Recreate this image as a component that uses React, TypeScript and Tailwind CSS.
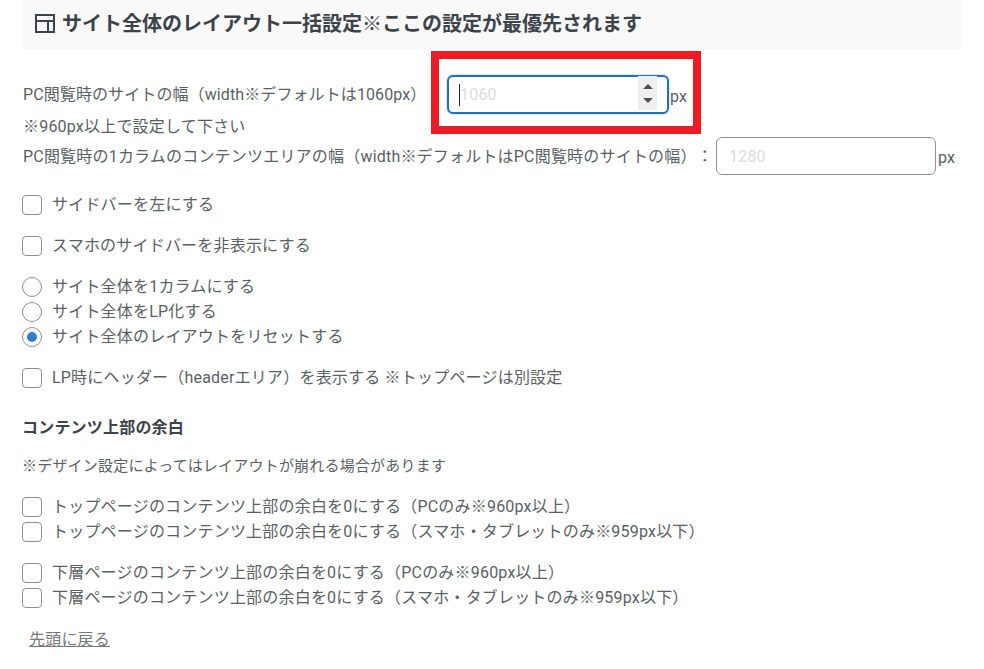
function Check({ label, className = "" }: { label: string; className?: string }) {
	return (
		<label className={`flex items-center h-[25px] ${className}`}>
			<span className="w-[20px] h-[20px] rounded-[4px] border border-[#8c8f94] bg-white shrink-0" />
			<span className="ml-[10px] whitespace-nowrap">{label}</span>
		</label>
	);
}

function Radio({ label, checked = false }: { label: string; checked?: boolean }) {
	return (
		<label className="flex items-center h-[25px]">
			<span className="w-[20px] h-[20px] rounded-full border border-[#8c8f94] bg-white shrink-0 flex items-center justify-center">
				{checked && <span className="w-[10px] h-[10px] rounded-full bg-[#2f7fc9]" />}
			</span>
			<span className="ml-[10px] whitespace-nowrap">{label}</span>
		</label>
	);
}

export default function App() {
	return (
		<div
			className="relative w-[984px] h-[669px] overflow-hidden bg-white pl-[22px] text-[16px] tracking-[0.2px] [text-spacing-trim:space-all] leading-[25px] text-[#5a5f65]"
			style={{ fontFamily: 'Roboto, "Noto Sans CJK JP", sans-serif' }}
		>
			<div className="w-[940px] h-[49px] bg-[#f9f9f9] flex items-center pl-[12px] text-[20px] tracking-normal font-bold text-[#3c434a]">
				<svg width="22" height="20" viewBox="0 0 22 20" fill="none" stroke="#3c434a" strokeWidth="2" className="mr-[6px] -mt-[1px]">
					<rect x="2" y="1" width="18" height="17" />
					<path d="M2 7h18M14 7v11" />
				</svg>
				<span className="whitespace-nowrap">サイト全体のレイアウト一括設定※ここの設定が最優先されます</span>
			</div>

			<div className="flex items-center mt-[26px] h-[39px]">
				<span className="w-[425px] whitespace-nowrap pl-px tracking-[0.1px]">PC閲覧時のサイトの幅（width※デフォルトは1060px）</span>
				<div className="relative w-[222px] h-[39px] rounded-[6px] border-2 border-[#2271b1] shadow-[0_0_2px_#72aee6] flex items-center pl-[11px] text-[#dcdcde] text-[16px]">
					<span className="absolute left-[10px] top-[7px] w-px h-[22px] bg-[#1d2327]" />
					1060
					<div className="absolute right-[10px] top-[-1px] w-[19px] h-[34px] bg-[#f0f0f0] flex flex-col items-center justify-center gap-[9px]">
						<span className="w-0 h-0 border-x-[5px] border-x-transparent border-b-[5px] border-b-[#505050]" />
						<span className="w-0 h-0 border-x-[5px] border-x-transparent border-t-[5px] border-t-[#505050]" />
					</div>
				</div>
				<span className="ml-px mt-[3px]">px</span>
			</div>

			<p className="h-[23px] pl-px whitespace-nowrap">※960px以上で設定して下さい</p>

			<div className="flex items-center h-[38px]">
				<span className="w-[694px] whitespace-nowrap pl-px">PC閲覧時の1カラムのコンテンツエリアの幅（width※デフォルトはPC閲覧時のサイトの幅）：</span>
				<div className="w-[220px] h-[38px] rounded-[6px] border border-[#8c8f94] flex items-center pl-[12px] text-[#dcdcde] text-[16px]">1280</div>
				<span className="ml-[2px] mt-[3px]">px</span>
			</div>

			<Check label="サイドバーを左にする" className="mt-[17px]" />
			<Check label="スマホのサイドバーを非表示にする" className="mt-[16px]" />

			<div className="mt-[16px]">
				<Radio label="サイト全体を1カラムにする" />
				<Radio label="サイト全体をLP化する" />
				<Radio label="サイト全体のレイアウトをリセットする" checked />
			</div>

			<Check label="LP時にヘッダー（headerエリア）を表示する ※トップページは別設定" className="mt-[16px]" />

			<h3 className="mt-[25px] font-bold text-[#3c434a] text-[16px]">コンテンツ上部の余白</h3>
			<p className="mt-[14px] text-[15px]">※デザイン設定によってはレイアウトが崩れる場合があります</p>

			<div className="mt-[15px]">
				<Check label="トップページのコンテンツ上部の余白を0にする（PCのみ※960px以上）" />
				<Check label="トップページのコンテンツ上部の余白を0にする（スマホ・タブレットのみ※959px以下）" />
			</div>
			<div className="mt-[16px]">
				<Check label="下層ページのコンテンツ上部の余白を0にする（PCのみ※960px以上）" />
				<Check label="下層ページのコンテンツ上部の余白を0にする（スマホ・タブレットのみ※959px以下）" />
			</div>

			<a className="block mt-[17px] ml-[7px] underline text-[#787878]">先頭に戻る</a>

			<div className="absolute left-[431px] top-[51px] w-[270px] h-[83px] border-[8px] border-[#ed1c24] pointer-events-none" />
		</div>
	);
}
